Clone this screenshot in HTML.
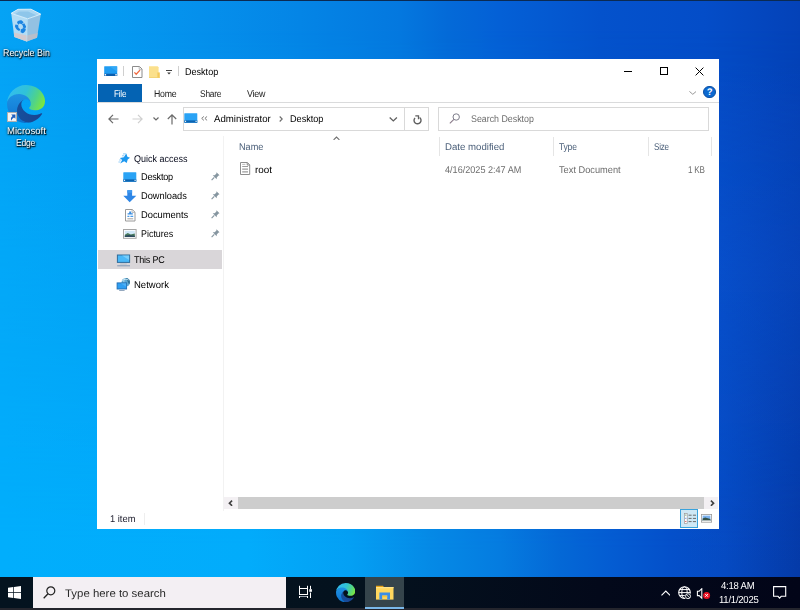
<!DOCTYPE html>
<html>
<head>
<meta charset="utf-8">
<title>Desktop</title>
<style>
*{box-sizing:border-box;margin:0;padding:0}
html,body{width:800px;height:610px;overflow:hidden}
body{font-family:"Liberation Sans",sans-serif;font-size:9.8px;text-rendering:geometricPrecision;color:#000;position:relative;
 background:#0478d8;}
.abs{position:absolute}
#wall{position:absolute;left:0;top:0;width:800px;height:610px;overflow:hidden;
 background:linear-gradient(90deg,#05a3f5 0%,#049bf1 12%,#0590ec 25%,#0485e6 37.5%,#0478df 50%,#046ad8 56%,#0460d6 62.5%,#0452cc 75%,#044dc8 88%,#0442b8 100%);}
#wall .bot{position:absolute;left:0;top:0;width:800px;height:610px;
 background:linear-gradient(90deg,#01aefc 0%,#02acfb 31%,#04a0f4 43.75%,#058ae6 53.75%,#057ce0 62.5%,#0468d6 70%,#045cd2 76.5%,#0450ca 83.75%,#054ac2 90.6%,#043aa8 100%);
 -webkit-mask-image:linear-gradient(180deg,transparent 30px,#000 550px);mask-image:linear-gradient(180deg,transparent 30px,#000 550px);}
#wall .rs{position:absolute;left:690px;top:60px;width:110px;height:517px;background:linear-gradient(180deg,rgba(30,110,255,0) 0%,rgba(30,110,255,.10) 40%,rgba(30,110,255,0) 100%)}
#wall .topline{position:absolute;left:0;top:0;width:800px;height:1px;background:#0b2a52}
.dicon{color:#fff;text-shadow:1px 1px 1px rgba(0,0,0,.95),0 1px 2px rgba(0,0,0,.85),0 0 3px rgba(0,0,0,.5)}
/* window */
#win{position:absolute;left:97px;top:59px;width:622px;height:469.500px;background:#fff;}
.t{position:absolute;white-space:nowrap;line-height:12px;transform-origin:0 50%}
/* taskbar */
#tb{position:absolute;left:0;top:577px;width:800px;height:33px;background:linear-gradient(90deg,#04131f 0%,#04121e 45%,#03091a 75%,#020518 100%)}
#tb .bl{position:absolute;left:0;top:31px;width:800px;height:2px;background:#24252d}
#search{position:absolute;left:33px;top:0;width:253px;height:31px;background:#f3eff3}
</style>
</head>
<body>
<div id="wall"><div class="bot"></div><div class="rs"></div><div class="topline"></div></div>

<!-- Desktop icons -->
<svg width="0" height="0" style="position:absolute"><defs>
<linearGradient id="ega" x1="0" y1="0" x2="1" y2="0"><stop offset="0" stop-color="#15509e"/><stop offset="1" stop-color="#1a4490"/></linearGradient>
<linearGradient id="egc" x1="0" y1="0" x2="0" y2="1"><stop offset="0" stop-color="#1f95e4"/><stop offset=".6" stop-color="#1580d8"/><stop offset="1" stop-color="#0a70cc"/></linearGradient>
<linearGradient id="ege" x1="0" y1="0.300" x2="1" y2="0.600"><stop offset="0" stop-color="#33bdf0"/><stop offset=".45" stop-color="#30c2d8"/><stop offset=".75" stop-color="#4fd38a"/><stop offset="1" stop-color="#7ae640"/></linearGradient>
<g id="edge"><g transform="translate(-4.630 -4.920)"><path d="M235.680,195.460a93.730,93.730,0,0,1-10.540,4.710,101.870,101.870,0,0,1-35.900,6.460c-47.320,0-88.540-32.550-88.540-74.320A31.480,31.480,0,0,1,117.130,105c-42.800,1.800-53.800,46.400-53.800,72.530,0,73.880,68.090,81.370,82.760,81.370,7.910,0,19.840-2.300,27-4.560l1.310-.44a128.340,128.340,0,0,0,66.600-52.800,4,4,0,0,0-5.320-5.640Z" fill="url(#ega)"/><path d="M110.340,246.340A79.200,79.200,0,0,1,87.600,225a80.720,80.720,0,0,1,29.530-120c3.120-1.470,8.450-4.130,15.540-4a32.350,32.350,0,0,1,25.690,13,31.880,31.880,0,0,1,6.360,18.660c0-.21,24.460-79.600-80-79.600-43.900,0-80,41.660-80,78.210a130.150,130.150,0,0,0,12.110,56,128,128,0,0,0,156.380,67.110,75.550,75.550,0,0,1-62.780-8Z" fill="url(#egc)"/><path d="M156.960,153.780c-.81,1.050-3.300,2.500-3.300,5.660,0,2.610,1.700,5.120,4.720,7.230,14.380,10,41.490,8.680,41.560,8.680a59.560,59.560,0,0,0,30.270-8.350,61.380,61.380,0,0,0,30.430-52.880c.26-22.410-8-37.310-11.340-43.910-21.190-41.450-66.930-65.290-116.670-65.290a128,128,0,0,0-128,126.200c.48-36.540,36.800-66.050,80-66.050,3.500,0,23.460.34,42,10.070,16.340,8.580,24.900,18.940,30.850,29.210,6.180,10.670,7.280,24.150,7.280,29.520S161.960,147.210,156.960,153.780Z" fill="url(#ege)"/></g></g>
</defs></svg>
<div id="desk">
 <svg class="abs" style="left:6px;top:4px" width="40" height="42" viewBox="0 0 40 42"><path d="M5.200 9.300L12 5.300 25 5.200 34.800 10.200 21.700 14.800z" fill="#8ec6ea"/><path d="M12 5.300L25 5.200 34.800 10.200 31 11.500 22 7.500 13 7.600 8.500 10.400 5.200 9.300z" fill="#a9d6f2"/><path d="M5.200 9.300L21.700 14.800 20.700 37.600 8.300 33.100z" fill="#b2dcf5"/><path d="M21.700 14.800L34.800 10.200 31 33.800 20.700 37.600z" fill="#93c1e2"/><path d="M7.900 28.500L20.900 31.500 20.700 37.600 8.300 33.100z" fill="#d3cbd0"/><path d="M20.900 31.500L31.700 29 31 33.800 20.700 37.600z" fill="#b7bfcb"/><path d="M5.200 9.300L12 5.300 25 5.200 34.800 10.200 21.700 14.800z" fill="none" stroke="#dff1fb" stroke-width=".9"/><path d="M21.700 14.800L20.700 37.600" stroke="#c9e6f7" stroke-width=".6"/><g fill="#1b84e2"><path d="M11 18.200c1.200-1.600 3-2.300 4.800-1.700l1.800 1.800-1.800 2-2.200-0.800-1.400 1.200z"/><path d="M18.300 19.200l1.800 3.200-0.600 1.800-2.800-0.600 0.400-1.600-1.400-1.600z"/><path d="M9.500 20.500l2.600 0.600 0.400 2.600 1.800 1.600-1 1.800c-2.200-0.600-3.800-2.600-4.400-4.800z"/><path d="M14.800 25.400l3-1.600 2 1.200c-0.200 2-1.200 3.400-3 4.200l-2.200-1z"/></g></svg>
 <div class="t dicon" id="d0" style="left:3.0px;top:47.9px;transform:scaleX(0.905)">Recycle Bin</div>
 <svg class="abs" style="left:7.200px;top:84.800px" width="38" height="38" viewBox="0 0 256 256"><use href="#edge"/></svg>
 <div class="abs" style="left:7px;top:112px;width:10px;height:10px;background:#f4f4f4;border:1px solid #b0b0b0"></div>
 <svg class="abs" style="left:8.500px;top:113.500px" width="7" height="7" viewBox="0 0 7 7"><path d="M2.200 0.600h4.200v4.200l-1.400-1.400C3.400 4.400 2.600 5.400 2.400 6.800 1.400 4.800 2 3.200 3.600 2z" fill="#1d5fc0"/></svg>
 <div class="t dicon" id="d1" style="left:6.5px;top:126.4px;transform:scaleX(0.977)">Microsoft</div>
 <div class="t dicon" id="d2" style="left:16.2px;top:138.1px;transform:scaleX(0.873);letter-spacing:-0.25px">Edge</div>
</div>

<!-- Explorer window -->
<div id="win">
 <!-- title bar -->
 <svg class="abs" style="left:7px;top:7px" width="14" height="11" viewBox="0 0 14 11"><rect x="0.200" y="0.300" width="13" height="9.700" rx="0.500" fill="#1f9cf2"/><path d="M5.500 0.300h7.700v5.500z" fill="#3aaef8" opacity=".7"/><rect x="0.200" y="7.700" width="13" height="2.300" fill="#0a5eae"/><rect x="0.600" y="8.100" width="1.500" height="1.400" fill="#fff"/><rect x="11.300" y="8.100" width="1.500" height="1.400" fill="#fff"/></svg>
 <div class="abs" style="left:26px;top:7px;width:1px;height:10px;background:#cfcfcf"></div>
 <svg class="abs" style="left:35px;top:7px" width="11" height="12" viewBox="0 0 11 12"><path d="M0.500 0.500h7l2.500 2.500v8.500h-9.500z" fill="#fff" stroke="#8c8c8c" stroke-width="1"/><path d="M7.200 0.600v2.700h2.700" fill="none" stroke="#a8a8a8" stroke-width=".8"/><path d="M2.400 6.400l1.800 1.900 3.800-4.200" fill="none" stroke="#f06a40" stroke-width="1.300"/></svg>
 <svg class="abs" style="left:52px;top:7px" width="11" height="12" viewBox="0 0 11 12"><path d="M0 0.300h8.600l1 1v10.500H0z" fill="#fbe08c"/><path d="M8.400 6.400h2.400v5.400H8.400z" fill="#f4c95a"/><path d="M0 11h10.800v0.800H0z" fill="#f2cf6a"/></svg>
 <svg class="abs" style="left:69px;top:11px" width="6" height="5" viewBox="0 0 6 5"><rect x="0" y="0" width="6" height="1" fill="#444"/><path d="M1.200 2.600h3.600l-1.800 2z" fill="#333"/></svg>
 <div class="abs" style="left:81px;top:7px;width:1px;height:10px;background:#cfcfcf"></div>
 <div class="t" id="ttl" style="left:87.7px;top:7.9px;color:#000;transform:scaleX(0.924)">Desktop</div>
 <!-- window controls -->
 <div class="abs" style="left:527px;top:12px;width:8px;height:1px;background:#000"></div>
 <div class="abs" style="left:563px;top:8px;width:8.200px;height:8px;border:1px solid #000"></div>
 <svg class="abs" style="left:598.300px;top:7.600px" width="9" height="9" viewBox="0 0 9 9"><path d="M0.600 0.600l7.800 7.800M8.400 0.600l-7.800 7.800" stroke="#000" stroke-width="1" fill="none"/></svg>
 <!-- ribbon tabs -->
 <div class="abs" style="left:1px;top:25px;width:44.300px;height:18px;background:#0463b3"></div>
 <div class="t" id="rf" style="left:17.0px;top:29.8px;color:#fff;transform:scaleX(0.828);letter-spacing:-0.25px">File</div>
 <div class="t" id="rh" style="left:56.8px;top:29.8px;color:#222;transform:scaleX(0.891);letter-spacing:-0.25px">Home</div>
 <div class="t" id="rs" style="left:103.4px;top:29.8px;color:#222;transform:scaleX(0.856);letter-spacing:-0.25px">Share</div>
 <div class="t" id="rv" style="left:149.6px;top:29.8px;color:#222;transform:scaleX(0.909);letter-spacing:-0.25px">View</div>
 <svg class="abs" style="left:591.600px;top:31.800px" width="7.600" height="4" viewBox="0 0 7.600 4"><path d="M0.400 0.400l3.400 2.900 3.400-2.900" stroke="#8c8c8c" stroke-width=".9" fill="none"/></svg>
 <div class="abs" style="left:606.400px;top:26.900px;width:12.600px;height:12.600px;border-radius:6.300px;background:#0c69d0;border:.8px solid #0b4fa4;color:#fff;font-size:9.500px;font-weight:bold;text-align:center;line-height:12.600px">?</div>
 <div class="abs" style="left:0;top:43px;width:622px;height:1px;background:#dadbdc"></div>
 <!-- nav row -->
 <svg class="abs" style="left:11px;top:55px" width="11" height="10" viewBox="0 0 11 10"><path d="M10.5 5H1.2M5 0.8L0.9 5 5 9.2" stroke="#6a6a6a" stroke-width="1.2" fill="none"/></svg>
 <svg class="abs" style="left:35px;top:55px" width="11" height="10" viewBox="0 0 11 10"><path d="M0.5 5h9.3M6 0.8L10.1 5 6 9.2" stroke="#cfcfcf" stroke-width="1.2" fill="none"/></svg>
 <svg class="abs" style="left:55.500px;top:58px" width="6" height="4" viewBox="0 0 6 4"><path d="M0.500 0.500l2.500 2.400 2.500-2.400" stroke="#686868" stroke-width="1.200" fill="none"/></svg>
 <svg class="abs" style="left:70px;top:55px" width="10" height="11" viewBox="0 0 10 11"><path d="M5 10.5V1.2M0.8 5L5 0.9 9.2 5" stroke="#6a6a6a" stroke-width="1.2" fill="none"/></svg>
 <div class="abs" style="left:85.600px;top:48.200px;width:222.400px;height:23.600px;border:1px solid #d9d9d9;background:#fff"></div>
 <div class="abs" style="left:307px;top:48px;width:25px;height:24px;border:1px solid #d9d9d9;background:#fff"></div>
 <svg class="abs" style="left:87px;top:54px" width="14" height="10" viewBox="0 0 14 10"><rect x="0.3" y="0.3" width="13" height="9.4" rx="0.5" fill="#2aa3f5"/><rect x="0.3" y="7.4" width="13" height="2.3" fill="#0b63b0"/><rect x="0.9" y="7.8" width="1.2" height="1.1" fill="#fff"/><rect x="11.5" y="7.8" width="1.2" height="1.1" fill="#fff"/></svg>
 <svg class="abs" style="left:104px;top:57.300px" width="7" height="5" viewBox="0 0 7 5"><path d="M2.900 0.400L0.700 2.400l2.200 2M6.100 0.400L3.900 2.400l2.200 2" stroke="#6e6e6e" stroke-width=".9" fill="none"/></svg>
 <div class="t" id="a1" style="left:117.1px;top:55.0px;color:#000;transform:scaleX(0.984)">Administrator</div>
 <svg class="abs" style="left:181.500px;top:57.400px" width="4" height="6" viewBox="0 0 4 6"><path d="M0.700 0.500l2.500 2.500-2.500 2.500" stroke="#6c6c6c" stroke-width="1.100" fill="none"/></svg>
 <div class="t" id="a2" style="left:192.7px;top:55.0px;color:#000;transform:scaleX(0.929)">Desktop</div>
 <svg class="abs" style="left:292px;top:58.300px" width="9" height="5" viewBox="0 0 9 5"><path d="M0.700 0.500l3.600 3.400 3.600-3.400" stroke="#606060" stroke-width="1.300" fill="none"/></svg>
 <svg class="abs" style="left:315.500px;top:55.500px" width="9" height="10" viewBox="0 0 9 10"><path d="M6.600 2.500A3.500 3.500 0 1 1 2.000 2.900" stroke="#606060" stroke-width="1.400" fill="none"/><path d="M2.300 0.900h3.200v3.300" stroke="#606060" stroke-width="1.300" fill="none"/></svg>
 <div class="abs" style="left:341px;top:48px;width:271px;height:24px;border:1px solid #d9d9d9;background:#fff"></div>
 <svg class="abs" style="left:352px;top:54px" width="12" height="11" viewBox="0 0 12 11"><circle cx="7.2" cy="4" r="3.2" stroke="#7d7d8a" stroke-width="1" fill="none"/><path d="M4.9 6.4L0.8 10.4" stroke="#8a7a8a" stroke-width="1.1"/></svg>
 <div class="t" id="sd" style="left:374.1px;top:55.0px;color:#6d6d6d;transform:scaleX(0.902)">Search Desktop</div>
 <!-- nav pane -->
 <div class="abs" style="left:126px;top:77px;width:1px;height:375px;background:#f2f2f2"></div>
 <svg class="abs" style="left:21px;top:93.500px" width="13" height="11" viewBox="0 0 13 11"><path d="M8.300 0.400L9.400 3.800 12 4.800 9.700 6.600 8.700 9.900 6.200 8.300 2.200 10.400 4.100 6.900 1.900 4.900 5.800 4.200z" fill="#1c98f0"/><path d="M5 0.900h3M4 2.800h2.200" stroke="#7cc4f6" stroke-width=".9"/><path d="M1.100 7h2M0.400 9h2" stroke="#8ccaf7" stroke-width=".9"/></svg>
 <div class="t" id="n0" style="left:37.0px;top:94.7px;color:#05081a;transform:scaleX(0.920)">Quick access</div>
 <svg class="abs" style="left:26px;top:113px" width="14" height="10" viewBox="0 0 14 10"><rect x="0.3" y="0.3" width="13" height="9.4" rx="0.5" fill="#2aa3f5"/><rect x="0.3" y="7.4" width="13" height="2.3" fill="#0b63b0"/><rect x="0.9" y="7.8" width="1.2" height="1.1" fill="#fff"/><rect x="11.5" y="7.8" width="1.2" height="1.1" fill="#fff"/></svg>
 <div class="t" id="n1" style="left:43.7px;top:113.0px;color:#000;transform:scaleX(0.935);letter-spacing:-0.25px">Desktop</div>
 <svg class="abs" style="left:26px;top:131px" width="14" height="13" viewBox="0 0 14 13"><path d="M4.300 0.200h4.800v5.600h4.200L6.700 12.300 0.300 5.800h4z" fill="#2e86e6"/><path d="M4.300 0.200h4.800v2.600H4.300z" fill="#3f99f0"/></svg>
 <div class="t" id="n2" style="left:43.7px;top:131.9px;color:#000;transform:scaleX(0.945)">Downloads</div>
 <svg class="abs" style="left:27.500px;top:150px" width="11" height="13" viewBox="0 0 11 13"><path d="M0.500 0.500h6.800l2.700 2.700v8.800h-9.500z" fill="#fff" stroke="#9a9a9a" stroke-width="1"/><path d="M7.100 0.600v2.800h2.800" fill="none" stroke="#a8a8a8" stroke-width=".8"/><path d="M4.200 2.600h2v1.600h1.600v1.300H2.600V4.200h1.600z" fill="#3b8de0"/><path d="M2.400 7.300h2M5.400 7.300h2.800" stroke="#4a9be8" stroke-width="1.200"/><path d="M2.400 9.800h5.800" stroke="#8a8a8a" stroke-width=".8"/></svg>
 <div class="t" id="n3" style="left:43.7px;top:150.9px;color:#000;transform:scaleX(0.953)">Documents</div>
 <svg class="abs" style="left:26px;top:169.800px" width="14" height="10" viewBox="0 0 14 10"><rect x="0.500" y="0.500" width="12.600" height="8.800" fill="#fff" stroke="#a6a6a6" stroke-width="1"/><rect x="1.800" y="1.800" width="10" height="6.200" fill="#cfe7f8"/><path d="M1.800 5.800l3-1.800 3 1.400 4-0.800v3.400h-10z" fill="#4a7a5c"/><path d="M1.800 6.800l3.600-0.800 6.400 0.800v1.200h-10z" fill="#2c4a5e"/></svg>
 <div class="t" id="n4" style="left:43.7px;top:169.9px;color:#000;transform:scaleX(0.910)">Pictures</div>
 <svg class="abs pin" style="left:113.800px;top:113px" width="9" height="9" viewBox="0 0 9 9"><path d="M5.500 0.200l3 3-1.200 0.500-1.500 1.700-0.100 1.900-4-4 1.900-0.100 1.700-1.500z" fill="#8696a0"/><path d="M3.300 5.400L0.600 8.100" stroke="#8696a0" stroke-width="1.200"/></svg>
 <svg class="abs pin" style="left:113.800px;top:132px" width="9" height="9" viewBox="0 0 9 9"><path d="M5.500 0.200l3 3-1.200 0.500-1.500 1.700-0.100 1.900-4-4 1.900-0.100 1.700-1.500z" fill="#8696a0"/><path d="M3.300 5.400L0.600 8.100" stroke="#8696a0" stroke-width="1.200"/></svg>
 <svg class="abs pin" style="left:113.800px;top:151px" width="9" height="9" viewBox="0 0 9 9"><path d="M5.500 0.200l3 3-1.200 0.500-1.500 1.700-0.100 1.900-4-4 1.900-0.100 1.700-1.500z" fill="#8696a0"/><path d="M3.300 5.400L0.600 8.100" stroke="#8696a0" stroke-width="1.200"/></svg>
 <svg class="abs pin" style="left:113.800px;top:170px" width="9" height="9" viewBox="0 0 9 9"><path d="M5.500 0.200l3 3-1.200 0.500-1.500 1.700-0.100 1.900-4-4 1.900-0.100 1.700-1.500z" fill="#8696a0"/><path d="M3.300 5.400L0.600 8.100" stroke="#8696a0" stroke-width="1.200"/></svg>
 <div class="abs" style="left:1px;top:191px;width:124px;height:19px;background:#d9d6d9"></div>
 <svg class="abs" style="left:19px;top:194.500px" width="15" height="13" viewBox="0 0 15 13"><rect x="1.400" y="1" width="12.200" height="7.400" fill="#4ab8f8" stroke="#2f6c9c" stroke-width="1"/><path d="M6 1.500h7.100v4.500z" fill="#86d4fc" opacity=".75"/><rect x="4.200" y="9.600" width="6.600" height="0.800" fill="#a8b8c8"/><rect x="1.200" y="11.300" width="12.800" height="1" fill="#8098b4"/></svg>
 <div class="t" id="n5" style="left:37.1px;top:196.2px;color:#000;transform:scaleX(0.920);letter-spacing:-0.25px">This PC</div>
 <svg class="abs" style="left:19px;top:219px" width="15" height="13" viewBox="0 0 15 13"><circle cx="9.800" cy="4.300" r="4.200" fill="#5fa9d3"/><path d="M9.800 0.100a4.200 4.200 0 0 1 3.600 6.400c-1.200-1-1.500-3.400-3.600-6.400z" fill="#2f6f96"/><path d="M6.200 2.600c1.600-1.400 4.400-1.800 6.400-0.600M8.600 0.400c-0.800 1.400-0.900 2.800-0.600 4.200" stroke="#d4ecf8" stroke-width=".8" fill="none"/><rect x="1.100" y="4.900" width="9.500" height="6.100" fill="#2e9ef2" stroke="#1f6cb2" stroke-width=".9"/><path d="M4.600 5.300h5.600v3.500z" fill="#62bcf8" opacity=".6"/><rect x="3.200" y="12" width="5.400" height="0.900" fill="#8aa0b8"/></svg>
 <div class="t" id="n6" style="left:37.1px;top:221.1px;color:#000;transform:scaleX(0.971)">Network</div>
 <!-- file list -->
 <svg class="abs" style="left:235.800px;top:76.800px" width="7" height="4.500" viewBox="0 0 7 4.500"><path d="M0.600 3.900l2.900-2.900 2.900 2.900" stroke="#707070" stroke-width="1.100" fill="none"/></svg>
 <div class="t" id="h0" style="left:141.8px;top:82.7px;color:#4c607a;transform:scaleX(0.933)">Name</div>
 <div class="abs" style="left:342px;top:78px;width:1px;height:19px;background:#e5e5e5"></div>
 <div class="t" id="h1" style="left:347.6px;top:82.7px;color:#4c607a;transform:scaleX(0.983)">Date modified</div>
 <div class="abs" style="left:456px;top:78px;width:1px;height:19px;background:#e5e5e5"></div>
 <div class="t" id="h2" style="left:462.4px;top:82.7px;color:#4c607a;transform:scaleX(0.874);letter-spacing:-0.25px">Type</div>
 <div class="abs" style="left:551px;top:78px;width:1px;height:19px;background:#e5e5e5"></div>
 <div class="t" id="h3" style="left:556.6px;top:82.7px;color:#4c607a;transform:scaleX(0.822);letter-spacing:-0.25px">Size</div>
 <div class="abs" style="left:614px;top:78px;width:1px;height:19px;background:#e5e5e5"></div>
 <svg class="abs" style="left:143px;top:103px" width="11" height="13" viewBox="0 0 11 13"><path d="M0.500 0.500h6.900l2.300 2.300v9.700H0.500z" fill="#fff" stroke="#8e8e8e" stroke-width="1"/><path d="M7.200 0.700v2.300h2.300" fill="none" stroke="#7a7a7a" stroke-width=".9"/><path d="M2.200 2.400h3.200" stroke="#b4b4b4" stroke-width=".9"/><path d="M2.200 4.500h5.800M2.200 7.100h5.800M2.200 9.800h5.800" stroke="#9c9c9c" stroke-width="1.200"/></svg>
 <div class="t" id="f0" style="left:157.8px;top:105.9px;color:#000;transform:scaleX(1.008)">root</div>
 <div class="t" id="f1" style="left:348.1px;top:105.8px;color:#6d6d6d;transform:scaleX(0.928)">4/16/2025 2:47 AM</div>
 <div class="t" id="f2" style="left:462.4px;top:105.8px;color:#6d6d6d;transform:scaleX(0.943)">Text Document</div>
 <div class="t" id="f3" style="left:591.0px;top:105.8px;color:#6d6d6d;transform:scaleX(0.830);letter-spacing:-0.25px">1 KB</div>
 <!-- scrollbar -->
 <div class="abs" style="left:127px;top:438px;width:494px;height:12px;background:#f3f0f3"></div>
 <div class="abs" style="left:141px;top:438px;width:466px;height:12px;background:#cdcdcd"></div>
 <svg class="abs" style="left:130.600px;top:440.800px" width="5" height="6.400" viewBox="0 0 5 6.400"><path d="M4.100 0.600L1.400 3.200l2.700 2.600" stroke="#404040" stroke-width="1.600" fill="none"/></svg>
 <svg class="abs" style="left:612.500px;top:440.800px" width="5" height="6.400" viewBox="0 0 5 6.400"><path d="M0.900 0.600l2.700 2.600-2.700 2.600" stroke="#404040" stroke-width="1.600" fill="none"/></svg>
 <!-- status bar -->
 <div class="t" id="st" style="left:12.6px;top:455.0px;color:#1a1a2a;transform:scaleX(0.954)">1 item</div>
 <div class="abs" style="left:46.500px;top:454px;width:1px;height:12px;background:#eeeeee"></div>
 <div class="abs" style="left:583px;top:450px;width:18px;height:19px;background:#cfe8f5;border:1px solid #3aa3dc"></div>
 <svg class="abs" style="left:587px;top:454px" width="13" height="11" viewBox="0 0 13 11"><rect x="0.400" y="0.400" width="2.800" height="10.200" fill="#fff" stroke="#9a9a9a" stroke-width=".7"/><rect x="1.300" y="1.600" width="1" height="1" fill="#3a8a5a"/><rect x="1.300" y="4.800" width="1" height="1" fill="#3a7ae0"/><rect x="1.300" y="8" width="1" height="1" fill="#e03a3a"/><path d="M4.600 2.200h3M8.900 2.200h3.100M4.600 5.400h3M8.900 5.400h3.100M4.600 8.600h3M8.900 8.600h3.100" stroke="#6a6a6a" stroke-width="1"/></svg>
 <svg class="abs" style="left:604px;top:454.500px" width="11" height="9" viewBox="0 0 11 9"><rect x="0.400" y="0.400" width="10.200" height="7.800" fill="#fff" stroke="#9a9a9a" stroke-width=".8"/><rect x="1.600" y="1.600" width="7.800" height="5.400" fill="#7ab2f0"/><path d="M1.600 4.400l2.600-1 5.200 1.600v2H1.600z" fill="#34524a"/><path d="M1.600 6.200h7.800v0.800H1.600z" fill="#c8d0d0"/></svg>
</div>

<!-- Taskbar -->
<div id="tb">
 <div class="bl"></div>
 <svg class="abs" style="left:8px;top:9px" width="13" height="13" viewBox="0 0 13 13"><path d="M0 1.8l5.3-0.8v5.2H0zM6 0.9L13 0v6.2H6zM0 6.9h5.3v5.2L0 11.3zM6 6.9h7V13l-7-0.9z" fill="#fff"/></svg>
 <div id="search"></div>
 <svg class="abs" style="left:43px;top:9px" width="13" height="13" viewBox="0 0 13 13"><circle cx="7.8" cy="4.8" r="4" stroke="#222" stroke-width="1.2" fill="none"/><path d="M5 7.8L0.7 12.2" stroke="#222" stroke-width="1.3"/></svg>
 <div class="t" id="ts" style="left:65.2px;top:9.6px;font-size:11px;line-height:14px;color:#2a2a2a;transform:scaleX(1.037)">Type here to search</div>
 <!-- task view -->
 <svg class="abs" style="left:298px;top:8px" width="15" height="14" viewBox="0 0 15 14"><path d="M1.500 0.800v9.200M9.500 0.800v9.200M1.500 11v2M9.500 11v2" stroke="#fff" stroke-width="1" fill="none"/><path d="M1 3.500h9M1 9.500h9" stroke="#fff" stroke-width="1"/><path d="M2 11.500h7" stroke="#9aa4ae" stroke-width="1"/><path d="M12.500 0.800v3.400M12.500 7.600v5.400" stroke="#fff" stroke-width="1"/><rect x="11.300" y="4.200" width="2.600" height="2.600" fill="#fff"/></svg>
 <!-- edge -->
 <svg class="abs" style="left:335.900px;top:5.900px" width="19.300" height="19.300" viewBox="0 0 256 256"><use href="#edge"/></svg>
 <!-- explorer button -->
 <div class="abs" style="left:365px;top:0;width:39px;height:31px;background:#35444b"></div>
 <div class="abs" style="left:365px;top:30px;width:39px;height:1.500px;background:#7ab8ea"></div>
 <svg class="abs" style="left:376px;top:8px" width="18" height="15" viewBox="0 0 18 15"><path d="M0 0.8h7l1 1.4H0z" fill="#e8a317"/><rect x="0" y="2" width="17.5" height="12.6" fill="#ffd75e"/><path d="M0 2h17.5v1.2H0z" fill="#ffe288"/><path d="M3.4 14.6V7.4h10.6v7.2h-2.8v-4H6.2v4z" fill="#3b8ee8"/><rect x="6.2" y="10.6" width="5" height="1.6" fill="#f6c53f"/></svg>
 <!-- tray -->
 <svg class="abs" style="left:660.800px;top:12.500px" width="9.600" height="6" viewBox="0 0 9.600 6"><path d="M0.500 5.300L4.800 1l4.300 4.300" stroke="#fff" stroke-width="1.100" fill="none"/></svg>
 <svg class="abs" style="left:678px;top:9px" width="15" height="14" viewBox="0 0 15 14"><circle cx="6.500" cy="6.600" r="5.800" stroke="#fff" stroke-width="1.100" fill="none"/><ellipse cx="6.500" cy="6.600" rx="2.700" ry="5.800" stroke="#fff" stroke-width="1" fill="none"/><path d="M0.800 6.600h11.400M1.700 3.600h9.600M1.700 9.600h9.600" stroke="#fff" stroke-width="1"/><circle cx="10" cy="10.200" r="3.300" fill="#030a1a"/><circle cx="10" cy="10.200" r="2.500" fill="none" stroke="#fff" stroke-width=".9"/><path d="M8.300 8.500l3.400 3.400" stroke="#fff" stroke-width=".9"/></svg>
 <svg class="abs" style="left:696px;top:10.500px" width="15" height="12" viewBox="0 0 15 12"><path d="M1.400 3.200h1.800l2.600-2.500v9.600L3.200 7.600H1.400z" stroke="#fff" stroke-width="1.050" fill="none"/><circle cx="10.600" cy="7.400" r="3.500" fill="#e81123"/><path d="M9.300 6.100l2.600 2.600M11.900 6.100L9.300 8.700" stroke="#fff" stroke-width="1"/></svg>
 <div class="t" id="tm" style="left:721.0px;top:4.0px;color:#fff;font-size:10.2px;transform:scaleX(0.937);letter-spacing:-0.25px">4:18 AM</div>
 <div class="t" id="td" style="left:718.8px;top:18.2px;color:#fff;font-size:10.2px;transform:scaleX(0.935);letter-spacing:-0.25px">11/1/2025</div>
 <svg class="abs" style="left:772.900px;top:8.900px" width="14" height="14" viewBox="0 0 14 14"><path d="M0.600 0.600h12.100v9.700H8.200l-1.600 1.900-1.600-1.900H0.600z" stroke="#fff" stroke-width="1.100" fill="none"/></svg>
</div>
</body>
</html>
